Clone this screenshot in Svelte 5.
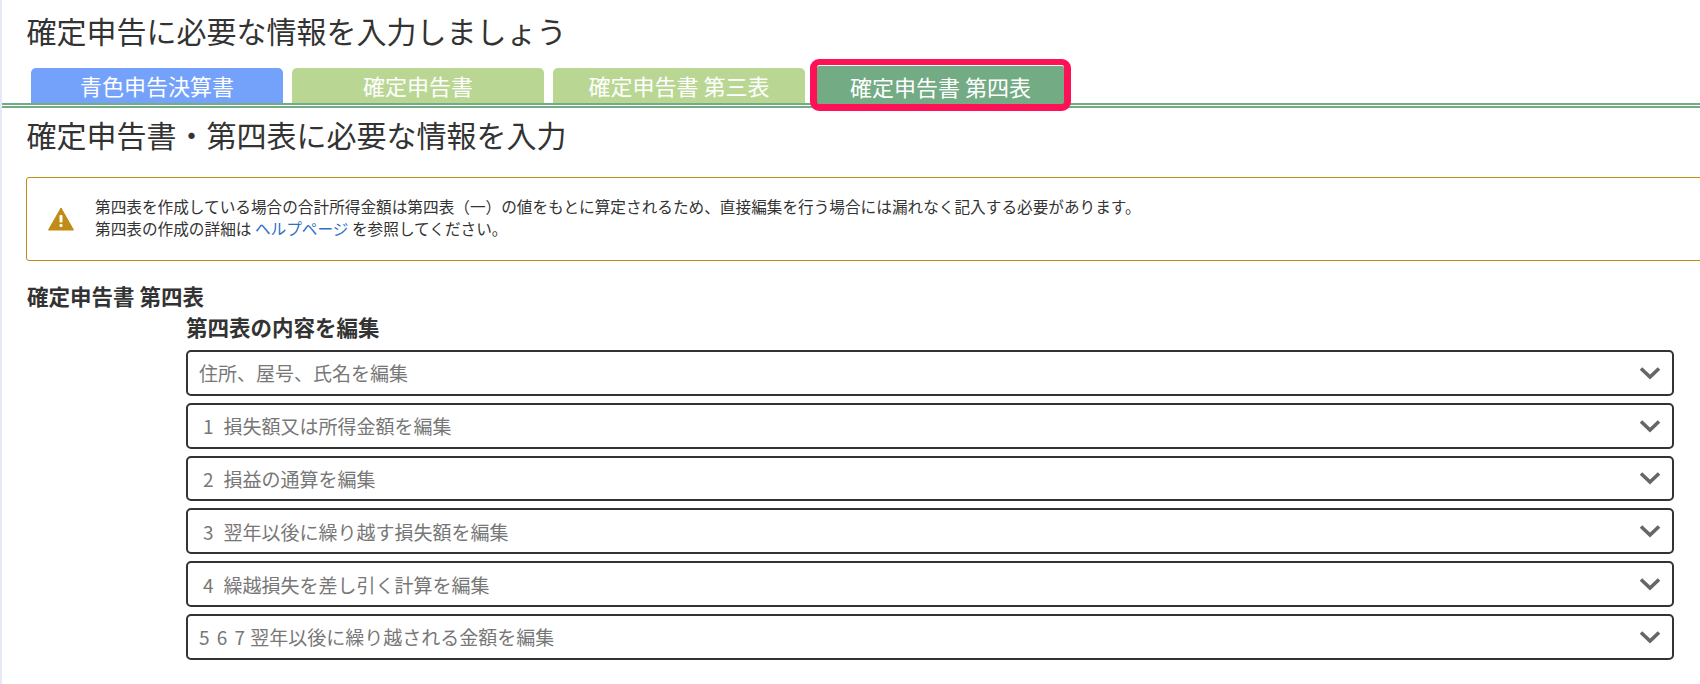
<script>
  const tabs = [
    { label: "青色申告決算書", color: "blue" },
    { label: "確定申告書", color: "green" },
    { label: "確定申告書 第三表", color: "green" },
    { label: "確定申告書 第四表", color: "active" }
  ];
  const rows = [
    { num: "", title: "住所、屋号、氏名を編集" },
    { num: "1", title: "損失額又は所得金額を編集" },
    { num: "2", title: "損益の通算を編集" },
    { num: "3", title: "翌年以後に繰り越す損失額を編集" },
    { num: "4", title: "繰越損失を差し引く計算を編集" },
    { num: "5 6 7", title: "翌年以後に繰り越される金額を編集" }
  ];
</script>

<div class="page">
  <h1>確定申告に必要な情報を入力しましょう</h1>

  <div class="tabs">
    {#each tabs as tab}
      <div class="tab {tab.color}">{tab.label}</div>
    {/each}
  </div>
  <div class="rule"></div>

  <h2>確定申告書・第四表に必要な情報を入力</h2>

  <div class="alert">
    <svg class="warn" width="26" height="24" viewBox="0 0 26 24">
      <path d="M13 1 L25.5 23 L0.5 23 Z" fill="#c08b17" stroke="#c08b17" stroke-linejoin="round" />
      <rect x="11.5" y="8" width="3" height="7.6" rx="1" fill="#fff" />
      <rect x="11.5" y="17" width="3" height="3" rx="1" fill="#fff" />
    </svg>
    <p>
      第四表を作成している場合の合計所得金額は第四表（一）の値をもとに算定されるため、直接編集を行う場合には漏れなく記入する必要があります。<br />
      第四表の作成の詳細は <a href="#help">ヘルプページ</a> を参照してください。
    </p>
  </div>

  <h3>確定申告書 第四表</h3>
  <div class="editor">
    <h4>第四表の内容を編集</h4>
    {#each rows as row}
      <div class="row">
        <span class="label">
          {#if row.num}<span class="num" class:wide={row.num.length > 1}>{row.num}</span>{/if}{row.title}
        </span>
        <svg width="22" height="14" viewBox="0 0 22 14">
          <path d="M2 2.5 L11 11 L20 2.5" fill="none" stroke="#666" stroke-width="3.6" />
        </svg>
      </div>
    {/each}
  </div>
</div>

<style>
  :global(body) {
    margin: 0;
    background: #fff;
    overflow: hidden;
  }
  .page {
    height: 684px;
    box-sizing: border-box;
    border-left: 2px solid #e4e8f7;
    overflow: hidden;
    color: #333;
    font-family: "Noto Sans CJK JP", "Noto Sans", sans-serif;
  }
  h1, h2 {
    margin: 0 0 0 24.5px;
    font-size: 30px;
    font-weight: 400;
    line-height: 40px;
  }
  h1 {
    padding-top: 10px;
  }
  .tabs {
    display: flex;
    align-items: flex-end;
    gap: 9px;
    margin: 18px 0 0 29px;
    height: 35px;
  }
  .tab {
    position: relative;
    width: 252px;
    height: 35px;
    border-radius: 5px 5px 0 0;
    color: #fff;
    font-size: 22px;
    line-height: 35px;
    text-align: center;
  }
  .blue { background: #74a2fb; }
  .green { background: #b9d793; }
  .active {
    width: 247px;
    height: 38px;
    margin: 0 0 -1px 3px;
    border-radius: 0;
    line-height: 41px;
    background: #72ab84;
  }
  /* annotation frame round the current tab */
  .active::after {
    content: "";
    position: absolute;
    inset: -7px;
    border: 7px solid #ff1158;
    border-top-width: 6px;
    border-radius: 9px;
    box-shadow: inset 0 1px 0 #fff;
  }
  .rule {
    height: 1px;
    border-top: 2px solid #72ab84;
    border-bottom: 2px solid #72ab84;
  }
  h2 {
    margin-top: 6px;
  }
  .alert {
    display: flex;
    align-items: center;
    gap: 21px;
    height: 84px;
    box-sizing: border-box;
    margin: 23px -20px 0 24px;
    padding-left: 21px;
    border: 1px solid #bf8c10;
    border-radius: 3px;
  }
  .alert p {
    margin: 0;
    padding-bottom: 3px;
    font-size: 15.65px;
    line-height: 22px;
  }
  .alert a {
    color: #2f6fc4;
    text-decoration: none;
  }
  h3, h4 {
    margin: 0;
    font-size: 21.5px;
    font-weight: 700;
    line-height: 30px;
  }
  h3 {
    margin: 20px 0 0 25px;
  }
  .editor {
    display: flex;
    flex-direction: column;
    gap: 7px;
    margin: 1px 26px 0 184px;
  }
  .editor h4 {
    margin-bottom: 1px;
  }
  .row {
    display: flex;
    align-items: center;
    justify-content: space-between;
    height: 45.8px;
    box-sizing: border-box;
    padding: 0 11px 0 11px;
    border: 2px solid #333;
    border-radius: 5px;
  }
  .label {
    color: #777;
    font-size: 19px;
  }
  .num {
    margin: 0 10px 0 4px;
  }
  .num.wide {
    margin: 0 5px 0 0;
    word-spacing: 3px;
  }
</style>
